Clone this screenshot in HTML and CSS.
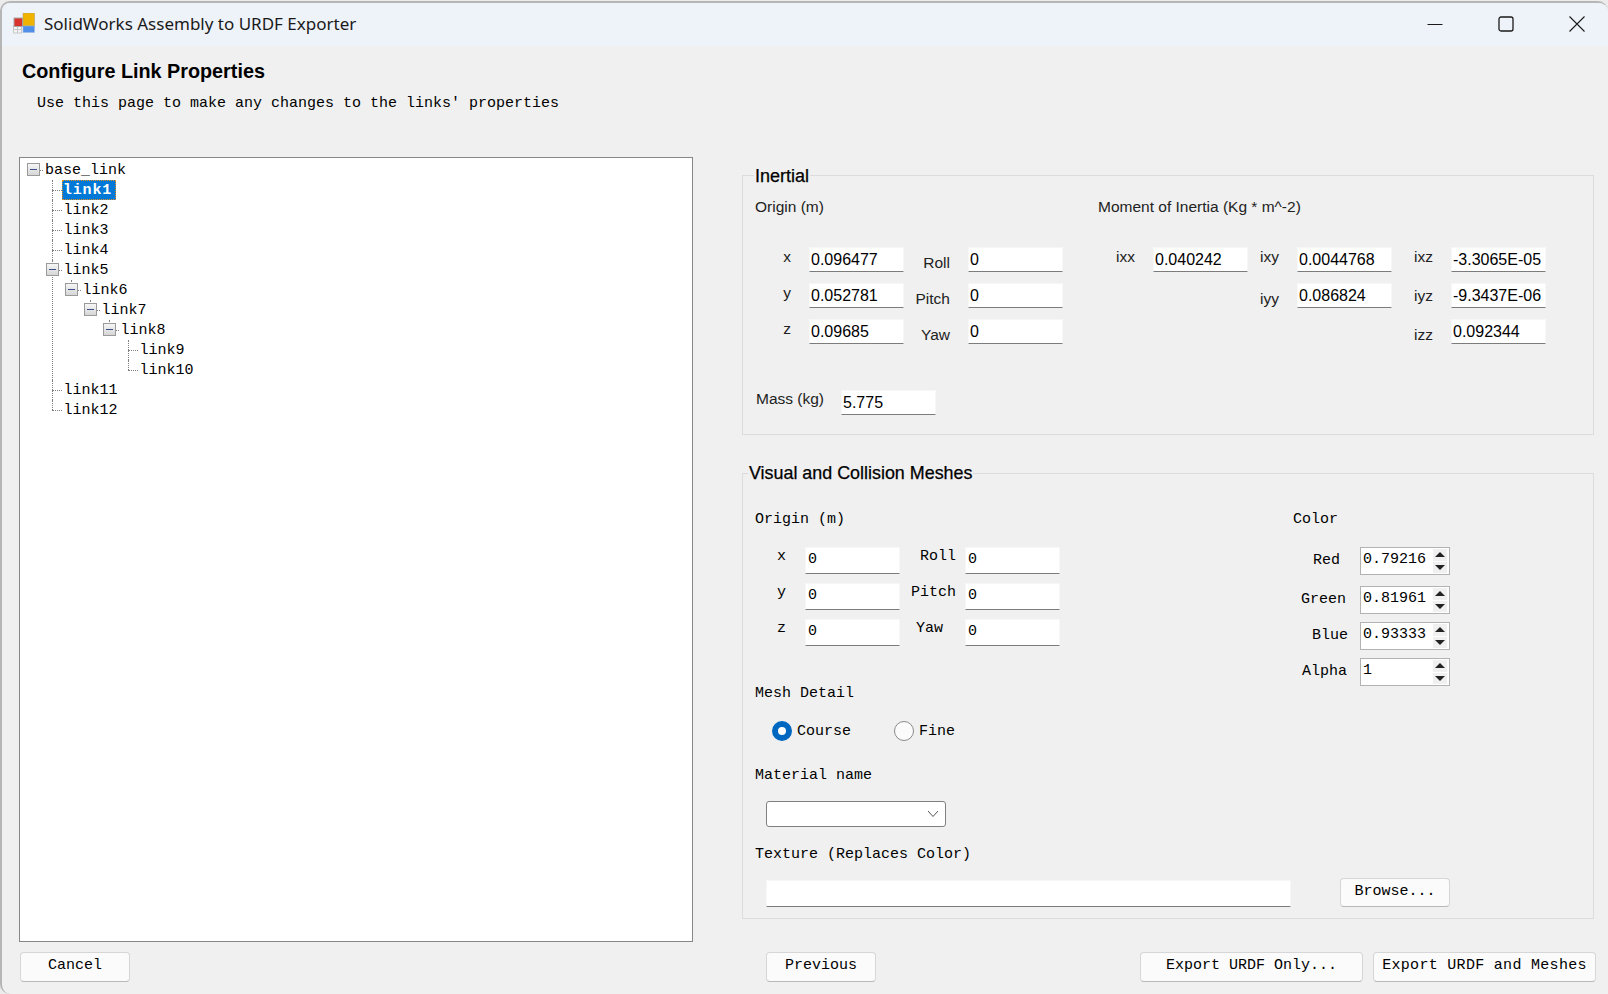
FILE: index.html
```html
<!DOCTYPE html>
<html lang="en">
<head>
<meta charset="utf-8">
<title>SolidWorks Assembly to URDF Exporter</title>
<link rel="stylesheet" href="styles.css">
</head>
<body>
<div class="window">
  <header class="titlebar">
    <svg class="app-icon" width="22" height="21" viewBox="0 0 22 21">
      <rect x="0.5" y="13" width="8" height="7" fill="#f4f4f4" stroke="#c8c8c8"/>
      <path d="M4.5 13v7M0.5 16.5h8" stroke="#c8c8c8" fill="none"/>
      <rect x="1" y="5" width="8.5" height="8.5" fill="#d8332c" stroke="#a8a8a8"/>
      <rect x="10" y="0" width="11.5" height="13" fill="#f0b400" stroke="#b8a060" stroke-width="0.6"/>
      <rect x="10" y="13" width="11.5" height="6.5" fill="#4f8fe8" stroke="#9db8dc" stroke-width="0.6"/>
    </svg>
    <div class="title">SolidWorks Assembly to URDF Exporter</div>
    <div class="controls">
      <svg width="16" height="16" viewBox="0 0 16 16"><path d="M0.5 8.5h15" stroke="#1a1a1a" fill="none"/></svg>
      <svg width="16" height="16" viewBox="0 0 16 16"><rect x="1" y="1" width="14" height="14" rx="2" stroke="#1a1a1a" stroke-width="1.3" fill="none"/></svg>
      <svg width="16" height="16" viewBox="0 0 16 16"><path d="M0.5 0.5l15 15M15.5 0.5l-15 15" stroke="#1a1a1a" stroke-width="1.1" fill="none"/></svg>
    </div>
  </header>

  <div class="page-head">
    <h1 class="heading">Configure Link Properties</h1>
    <p class="subheading">Use this page to make any changes to the links' properties</p>
  </div>

  <main class="main">
    <div class="tree-box">
      <ul class="tree">
        <li class="root"><i class="exp"></i><span class="node">base_link</span>
          <ul>
            <li><span class="node selected">link1</span></li>
            <li><span class="node">link2</span></li>
            <li><span class="node">link3</span></li>
            <li><span class="node">link4</span></li>
            <li><i class="exp"></i><span class="node">link5</span>
              <ul>
                <li><i class="exp"></i><span class="node">link6</span>
                  <ul>
                    <li><i class="exp"></i><span class="node">link7</span>
                      <ul>
                        <li><i class="exp"></i><span class="node">link8</span>
                          <ul>
                            <li><span class="node">link9</span></li>
                            <li><span class="node">link10</span></li>
                          </ul>
                        </li>
                      </ul>
                    </li>
                  </ul>
                </li>
              </ul>
            </li>
            <li><span class="node">link11</span></li>
            <li><span class="node">link12</span></li>
          </ul>
        </li>
      </ul>
    </div>

    <div class="side">
      <section class="group inertial">
        <div class="legend legend-inertial">Inertial</div>
        <div class="inertial-grid">
          <div class="sans head-origin">Origin (m)</div>
          <div class="sans head-moment">Moment of Inertia (Kg * m^-2)</div>

          <div class="sans lbl">x</div><div class="field sans-val">0.096477</div>
          <div class="sans lbl low">Roll</div><div class="field sans-val">0</div>
          <div class="sans lbl">ixx</div><div class="field sans-val">0.040242</div>
          <div class="sans lbl">ixy</div><div class="field sans-val">0.0044768</div>
          <div class="sans lbl">ixz</div><div class="field sans-val">-3.3065E-05</div>

          <div class="sans lbl">y</div><div class="field sans-val">0.052781</div>
          <div class="sans lbl low">Pitch</div><div class="field sans-val">0</div>
          <div class="sans lbl low col5">iyy</div><div class="field sans-val">0.086824</div>
          <div class="sans lbl mid">iyz</div><div class="field sans-val">-9.3437E-06</div>

          <div class="sans lbl">z</div><div class="field sans-val">0.09685</div>
          <div class="sans lbl low">Yaw</div><div class="field sans-val">0</div>
          <div class="sans lbl low col7">izz</div><div class="field sans-val">0.092344</div>
        </div>
        <div class="mass-row">
          <div class="sans">Mass (kg)</div><div class="field sans-val">5.775</div>
        </div>
      </section>

      <section class="group meshes">
        <div class="legend legend-meshes">Visual and Collision Meshes</div>
        <div class="mesh-top">
          <div class="mesh-left">
            <div class="mono">Origin (m)</div>
            <div class="mesh-grid">
              <div class="mono lbl-m">x</div><div class="field tall mono-val">0</div>
              <div class="mono lbl-r">Roll</div><div class="field tall mono-val">0</div>
              <div class="mono lbl-m">y</div><div class="field tall mono-val">0</div>
              <div class="mono lbl-r">Pitch</div><div class="field tall mono-val">0</div>
              <div class="mono lbl-m">z</div><div class="field tall mono-val">0</div>
              <div class="mono lbl-r yaw">Yaw</div><div class="field tall mono-val">0</div>
            </div>
            <div class="mono section-detail">Mesh Detail</div>
            <div class="radios">
              <span class="radio on"></span><span class="mono radio-text">Course</span>
              <span class="radio"></span><span class="mono radio-text">Fine</span>
            </div>
            <div class="mono section-material">Material name</div>
            <div class="select">
              <svg width="12" height="8" viewBox="0 0 12 8"><path d="M1 1l5 5.5L11 1" stroke="#555" fill="none"/></svg>
            </div>
          </div>
          <div class="mesh-color">
            <div class="mono">Color</div>
            <div class="color-grid">
              <div class="mono c-lbl c-red">Red</div><div class="spin"><span class="mono-num">0.79216</span><span class="arrows"><i class="up"></i><i class="down"></i></span></div>
              <div class="mono c-lbl c-green">Green</div><div class="spin"><span class="mono-num">0.81961</span><span class="arrows"><i class="up"></i><i class="down"></i></span></div>
              <div class="mono c-lbl c-blue">Blue</div><div class="spin"><span class="mono-num">0.93333</span><span class="arrows"><i class="up"></i><i class="down"></i></span></div>
              <div class="mono c-lbl c-alpha">Alpha</div><div class="spin"><span class="mono-num">1</span><span class="arrows"><i class="up"></i><i class="down"></i></span></div>
            </div>
          </div>
        </div>
        <div class="mono section-texture">Texture (Replaces Color)</div>
        <div class="texture-row">
          <div class="field texture"></div>
          <button class="btn mono browse">Browse...</button>
        </div>
      </section>
    </div>
  </main>

  <footer class="footer">
    <button class="btn mono cancel">Cancel</button>
    <button class="btn mono previous">Previous</button>
    <button class="btn mono export export-first">Export URDF Only...</button>
    <button class="btn mono export export-wide">Export URDF and Meshes</button>
  </footer>
</div>
</body>
</html>
```

FILE: styles.css
```css
* { box-sizing: border-box; }
html, body { margin: 0; height: 100%; overflow: hidden; }
body { background: #ececec; }

.window {
  margin-top: 1px;
  width: 1608px;
  height: 993px;
  background: #f0f0f0;
  border-top: 2px solid #b6b6b6;
  border-left: 2px solid #b6b6b6;
  border-radius: 10px 10px 0 10px;
  overflow: hidden;
  color: #000;
}

.titlebar {
  height: 43px;
  background: #eef3f9;
  display: flex;
  align-items: center;
  padding: 0 0 2px 11px;
}
.app-icon { flex: none; }
.title {
  margin-left: 9px;
  font: 17px/24px "Noto Sans", sans-serif;
  color: #1a1a1a;
}
.controls {
  margin-left: auto;
  margin-right: 23px;
  display: flex;
  gap: 55px;
}

.page-head { padding: 13px 0 44px 20px; }
.heading { margin: 0; font: bold 19.8px/24px "Liberation Sans", sans-serif; }
.subheading {
  margin: 12px 0 0 15px;
  font: 15px/18px "Liberation Mono", monospace;
  white-space: pre;
}

.main {
  display: grid;
  grid-template-columns: 674px 852px;
  column-gap: 49px;
  padding-left: 17px;
  height: 785px;
}

/* tree */
.tree-box {
  background: #fff;
  border: 1px solid #878787;
  padding-top: 3px;
  overflow: hidden;
}
.tree, .tree ul { list-style: none; margin: 0; padding: 0; }
.tree { margin-left: 13px; font: 15px/20px "Liberation Mono", monospace; }
.tree ul { margin-left: 19px; }
.tree li { position: relative; }
.tree li::before {
  content: "";
  position: absolute;
  left: 0;
  top: 9px;
  width: 10px;
  border-top: 1px dotted #808080;
}
.tree li::after {
  content: "";
  position: absolute;
  left: 0;
  top: -1px;
  bottom: -1px;
  border-left: 1px dotted #808080;
}
.tree li:last-child::after { bottom: auto; height: 10px; }
.tree li.root::after { display: none; }
.tree .node {
  display: inline-block;
  height: 20px;
  margin-left: 10px;
  padding: 0 2px 0 1.5px;
  position: relative;
  vertical-align: top;
  white-space: nowrap;
}
.tree .root > .node { padding-left: 2px; }
.tree .node.selected {
  background: #0078d7;
  color: #fff;
  outline: 1px dotted #e8901c;
  outline-offset: -1px;
  font-weight: bold;
  margin-top: -1px;
  line-height: 21px;
  padding: 0 4px 0 1px;
  letter-spacing: 0.8px;
}
.exp {
  position: absolute;
  z-index: 1;
  left: -6px;
  top: 2px;
  width: 13px;
  height: 13px;
  border: 1px solid #9a9a9a;
  background: linear-gradient(#f6f6f6, #d6d6d6);
}
.exp::after {
  content: "";
  position: absolute;
  left: 2px;
  right: 2px;
  top: 5px;
  height: 1px;
  background: #3a4f8c;
}

/* groups */
.group {
  position: relative;
  border: 1px solid #dcdcdc;
}
.inertial { margin-top: 18px; height: 260px; padding: 22px 0 0 12px; }
.meshes { margin-top: 38px; height: 446px; padding: 37px 0 0 12px; }
.legend {
  position: absolute;
  background: #f0f0f0;
  font: 18px/22px "Liberation Sans", sans-serif;
  -webkit-text-stroke: 0.25px #000;
  padding: 0 1px 0 1px;
}
.legend-inertial { left: 11px; top: -11px; }
.legend-meshes { left: 5px; top: -12px; font-size: 17.9px; }

.sans { font: 15.5px/18px "Liberation Sans", sans-serif; color: #222; white-space: nowrap; }
.mono { font: 15px/18px "Liberation Mono", monospace; white-space: nowrap; }

.field {
  height: 25px;
  background: #fff;
  border: 1px solid #f7f7f7;
  border-bottom-color: #7c7c7c;
  white-space: nowrap;
  overflow: hidden;
}
.field.tall { height: 27px; }
.sans-val { font: 16px/23px "Liberation Sans", sans-serif; padding-left: 1px; color: #000; }
.mono-val { font: 15px/23px "Liberation Mono", monospace; padding-left: 2px; }

.inertial-grid {
  display: grid;
  grid-template-columns: 54px 95px 64px 95px 90px 95px 49px 95px 59px 95px;
  grid-template-rows: 49px 36px 36px 25px;
}
.head-origin { grid-column: 1 / 5; }
.head-moment { grid-column: 5 / -1; margin-left: 35px; }
.lbl { justify-self: end; margin-right: 18px; margin-top: 1px; }
.lbl.low { margin-top: 7px; }
.lbl.mid { margin-top: 4px; }
.col5 { grid-column: 7; }
.col7 { grid-column: 9; }

.mass-row { display: flex; align-items: flex-start; margin-top: 46px; }
.mass-row .sans { width: 86px; padding-left: 1px; }
.mass-row .field { width: 95px; }

.mesh-top { display: flex; }
.mesh-left { width: 538px; }
.mesh-grid {
  display: grid;
  grid-template-columns: 50px 95px 65px 95px;
  grid-template-rows: 36px 36px 27px;
  margin-top: 18px;
}
.lbl-m { justify-self: end; margin-right: 19px; margin-top: 1px; }
.lbl-r { justify-self: end; margin-right: 9px; margin-top: 1px; }
.lbl-r.yaw { margin-right: 22px; }

.color-grid {
  display: grid;
  grid-template-columns: 67px 90px;
  grid-template-rows: 39px 36px 36px 28px;
  margin-top: 18px;
}
.c-lbl { justify-self: end; margin-top: 5px; }
.c-red { margin-right: 20px; }
.c-green { margin-right: 14px; }
.c-blue { margin-right: 12px; }
.c-alpha { margin-right: 13px; }

.spin {
  height: 28px;
  background: #fff;
  border: 1px solid #b2b2b2;
  display: flex;
  justify-content: space-between;
  padding: 1px 2px 1px 2px;
}
.mono-num { font: 15px/22px "Liberation Mono", monospace; }
.arrows { width: 14px; display: flex; flex-direction: column; gap: 1px; }
.arrows i {
  flex: 1;
  background: #f0f0f0;
  display: flex;
  align-items: center;
  justify-content: center;
}
.arrows i::after {
  content: "";
  width: 0;
  height: 0;
  border-left: 5px solid transparent;
  border-right: 5px solid transparent;
}
.arrows .up::after { border-bottom: 5px solid #222; }
.arrows .down::after { border-top: 5px solid #222; }

.section-detail { margin-top: 39px; }
.radios { display: flex; align-items: center; margin: 18px 0 0 17px; height: 20px; }
.radio {
  width: 20px;
  height: 20px;
  border-radius: 50%;
  background: #fbfbfb;
  border: 1px solid #8a8a8a;
  flex: none;
}
.radio.on { border: 6px solid #0067c0; background: #fff; }
.radio-text { margin-left: 5px; width: 97px; padding-top: 2px; }
.section-material { margin-top: 26px; }
.select {
  margin: 16px 0 0 11px;
  width: 180px;
  height: 26px;
  background: #fff;
  border: 1px solid #7f7f7f;
  border-radius: 3px;
  display: flex;
  align-items: center;
  justify-content: flex-end;
  padding-right: 6px;
}
.section-texture { margin-top: 19px; }
.texture-row { display: flex; align-items: flex-end; gap: 49px; margin: 14px 0 0 11px; }
.texture { width: 525px; height: 27px; }

.btn {
  background: #fbfbfb;
  border: 1px solid #d6d6d6;
  border-bottom-color: #b8b8b8;
  border-radius: 4px;
  padding: 0 0 3px;
  color: #000;
  text-align: center;
}
.browse { width: 110px; height: 29px; padding: 0 0 1px; }

.footer { display: flex; padding: 10px 0 0 18px; }
.footer .btn { height: 30px; }
.cancel { width: 110px; }
.previous { width: 110px; margin-left: 636px; }
.export { width: 223px; margin-left: 10px; }
.export-first { margin-left: 264px; }
.export-wide { letter-spacing: 0.3px; }
```
